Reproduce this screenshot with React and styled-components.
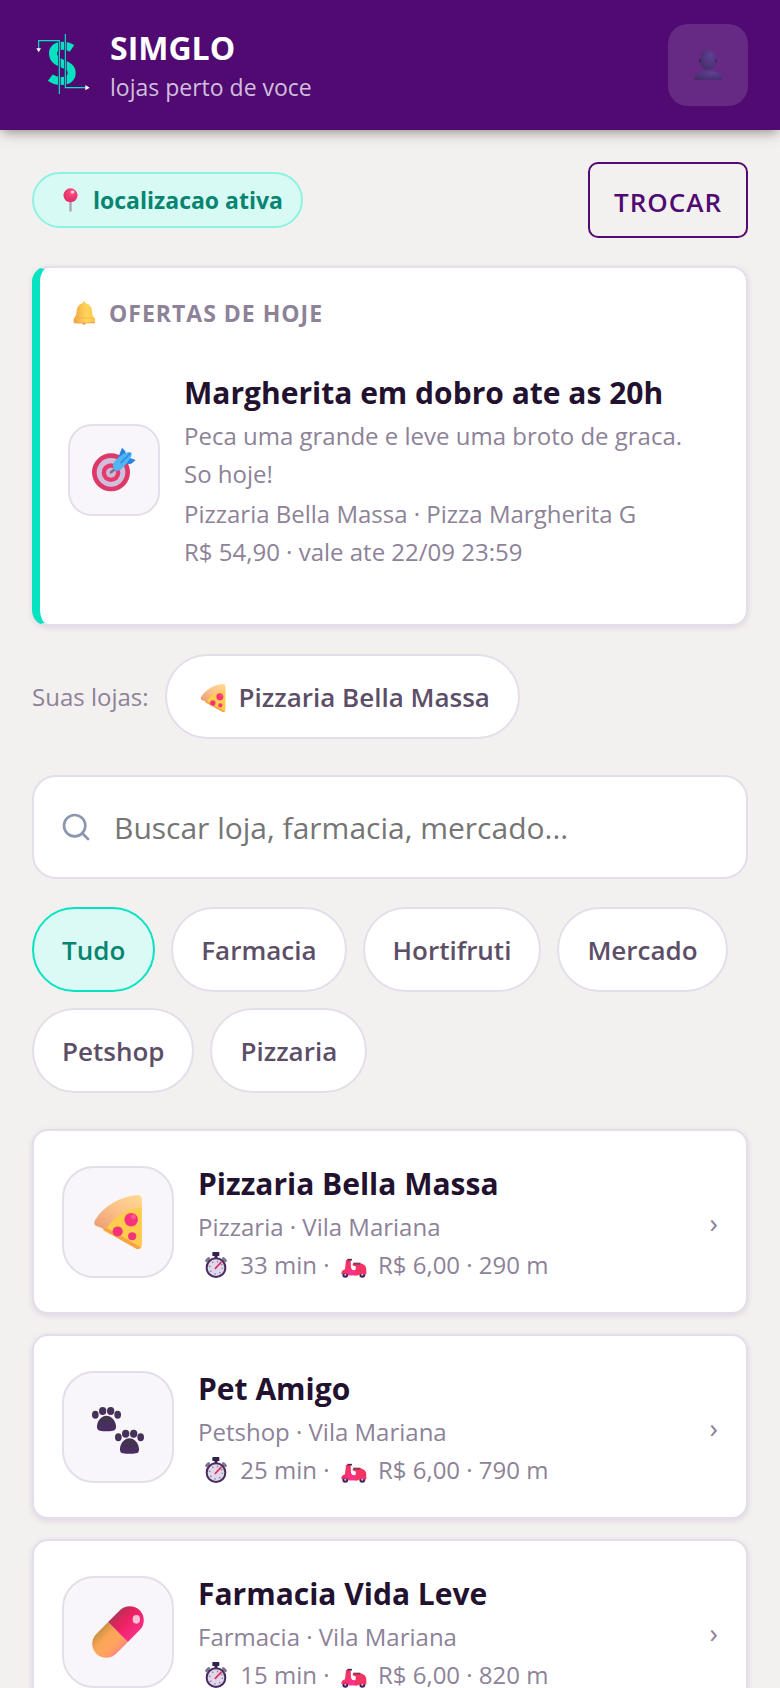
import React, { useState } from "react";
import styled, { createGlobalStyle } from "styled-components";
import { Search } from "lucide-react";

const c = {
  purple: "#500a72",
  teal: "#05e3c1",
  green: "#078570",
  page: "#f3f1f0",
  line: "#e3deea",
  ink: "#23122f",
  soft: "#5d4e68",
  muted: "#8d8298",
};

const GlobalStyle = createGlobalStyle`
  *, *::before, *::after { box-sizing: border-box; }
  body {
    margin: 0;
    background: ${c.page};
    color: ${c.ink};
    font-family: "Open Sans", "Noto Sans", sans-serif;
    font-size: 24px;
    line-height: 38px;
  }
  button, input { font: inherit; color: inherit; margin: 0; }
  h1, h2, h3, p, ul { margin: 0; padding: 0; }
  svg { display: block; flex: none; }
`;

const Header = styled.header`
  display: flex;
  align-items: center;
  gap: 16px;
  padding: 24px 32px;
  background: ${c.purple};
  box-shadow: 0 4px 12px -2px rgba(40, 36, 30, 0.5);
`;

const Brand = styled.div`
  flex: 1;
  min-width: 0;
  padding-top: 4px;
`;

const BrandName = styled.h1`
  color: #fff;
  font-size: 32px;
  line-height: 40px;
  font-weight: 700;
`;

const Tagline = styled.p`
  color: #d1bedd;
  font-size: 23px;
  line-height: 38px;
`;

const ProfileButton = styled.button`
  display: grid;
  place-items: center;
  width: 80px;
  height: 82px;
  padding: 0;
  border: 0;
  border-radius: 20px;
  background: rgba(255, 255, 255, 0.13);
`;

const Main = styled.main`
  display: flex;
  flex-direction: column;
  padding: 32px;
`;

const LocationRow = styled.div`
  display: flex;
  align-items: center;
  justify-content: space-between;
`;

const LocationBadge = styled.span`
  display: flex;
  align-items: center;
  gap: 6px;
  height: 56px;
  padding: 0 18px 0 20px;
  border: 2px solid #8cf3e2;
  border-radius: 28px;
  background: #d8faf4;
  color: ${c.green};
  font-size: 23px;
  font-weight: 700;
`;

const OutlineButton = styled.button`
  height: 76px;
  padding: 4px 24px 0;
  border: 2px solid ${c.purple};
  border-radius: 10px;
  background: transparent;
  color: ${c.purple};
  font-size: 26px;
  font-weight: 600;
  letter-spacing: 1px;
`;

const Card = styled.section`
  border: 2px solid ${c.line};
  border-radius: 16px;
  background: #fff;
  box-shadow: 0 2px 6px rgba(80, 10, 114, 0.12);
`;

const OfferCard = styled(Card)`
  margin-top: 28px;
  padding: 28px;
  border-left: 8px solid ${c.teal};
`;

const OfferHeading = styled.h2`
  display: flex;
  align-items: center;
  gap: 8px;
  color: ${c.muted};
  font-size: 23px;
  line-height: 34px;
  font-weight: 700;
  letter-spacing: 1px;
  text-transform: uppercase;
`;

const OfferBody = styled.div`
  display: flex;
  align-items: center;
  gap: 24px;
  padding: 38px 16px 25px 0;
`;

const Tile = styled.span`
  display: grid;
  place-items: center;
  flex: none;
  width: ${(p) => (p.$large ? 112 : 92)}px;
  height: ${(p) => (p.$large ? 112 : 92)}px;
  border: 2px solid ${c.line};
  border-radius: ${(p) => (p.$large ? 32 : 24)}px;
  background: #f8f6fa;
`;

const Details = styled.div`
  display: flex;
  flex-direction: column;
  flex: 1;
  min-width: 0;
`;

const Name = styled.h3`
  font-size: 30px;
  line-height: 49px;
  font-weight: 700;
`;

const Text = styled.p`
  color: ${c.muted};
`;

const OfferTerms = styled(Text)`
  margin-top: 2px;
`;

const MineRow = styled.div`
  display: flex;
  align-items: center;
  gap: 16px;
  margin-top: 28px;
  color: ${c.muted};
`;

const Pill = styled.button`
  display: flex;
  align-items: center;
  gap: 8px;
  padding: 22px 28px 20px;
  border: 2px solid ${(p) => (p.$active ? c.teal : c.line)};
  border-radius: 43px;
  background: ${(p) => (p.$active ? "#dbfaf5" : "#fff")};
  color: ${(p) => (p.$active ? c.green : c.soft)};
  font-size: 26px;
  line-height: 39px;
  font-weight: 600;
`;

const SearchBox = styled.label`
  display: flex;
  align-items: center;
  gap: 22px;
  height: 104px;
  margin-top: 36px;
  padding: 0 26px;
  border: 2px solid ${c.line};
  border-radius: 24px;
  background: #fff;
  color: #8b97ae;
`;

const SearchInput = styled.input`
  flex: 1;
  min-width: 0;
  padding: 0;
  border: 0;
  outline: 0;
  background: transparent;
  color: ${c.ink};
  font-size: 30px;
  line-height: 45px;
  &::placeholder { color: #757575; opacity: 1; }
`;

const Filters = styled.div`
  display: flex;
  flex-wrap: wrap;
  gap: 16px;
  margin-top: 28px;
`;

const StoreList = styled.ul`
  display: flex;
  flex-direction: column;
  gap: 20px;
  margin-top: 36px;
  list-style: none;
`;

const StoreLink = styled(Card).attrs({ as: "a" })`
  display: flex;
  align-items: center;
  gap: 24px;
  padding: 28px;
  color: inherit;
  text-decoration: none;
`;

const Delivery = styled(Text)`
  display: flex;
  align-items: center;
  white-space: pre;
`;

const Chevron = styled.span`
  color: ${c.muted};
  font-size: 28px;
`;

const Glyph = styled.svg.attrs({ "aria-hidden": true })`
  width: ${(p) => p.$w}px;
  height: ${(p) => p.$h || p.$w}px;
`;

const Logo = () => (
  <Glyph $w={62} $h={64} viewBox="96 99 186 192" fill="none">
    <path d="M216 145C207 139 197 137 187 137C170 137 159 147 159 160C159 179 173 185 188 191C206 198 215 204 215 219C215 235 203 243 184 243C171 243 160 240 151 233" stroke={c.teal} strokeWidth="24" />
    <path d="M178 122V282M196 102V263" stroke={c.purple} strokeWidth="8" />
    <path d="M116 146V122H178V282M196 102V263H257" stroke={c.teal} strokeWidth="3.500" />
    <path d="M109 145H123L116 157ZM256 255V271L269 263Z" fill="#fff" />
  </Glyph>
);

const Person = () => (
  <Glyph $w={32} viewBox="905 147 96 96">
    <defs>
      <radialGradient id="person" cx=".65" cy=".3" r=".8">
        <stop stopColor="#5f4093" />
        <stop offset="1" stopColor="#462c6b" />
      </radialGradient>
    </defs>
    <ellipse cx="930" cy="183" rx="4" ry="6" fill="#342052" />
    <ellipse cx="976" cy="183" rx="4" ry="6" fill="#342052" />
    <path d="M931 172C930 157 937 150 953 150S977 157 976 172V186C976 200 966 210 953 210S931 200 931 186Z" fill="url(#person)" />
    <path d="M910 240C916 219 933 209 953 209S990 219 996 240Z" fill="url(#person)" />
  </Glyph>
);

const Pin = () => (
  <Glyph $w={33} $h={24} viewBox="161 562 99 72">
    <defs>
      <radialGradient id="pin" cx=".62" cy=".28" r=".75">
        <stop stopColor="#ff8fb0" />
        <stop offset=".3" stopColor="#fa4079" />
        <stop offset="1" stopColor="#d92f66" />
      </radialGradient>
    </defs>
    <rect x="207" y="598" width="7" height="35" rx="3" fill="#aaa3b8" />
    <circle cx="210.500" cy="584" r="21" fill="url(#pin)" />
    <ellipse cx="217" cy="574" rx="5" ry="4" fill="#ffd6e2" />
  </Glyph>
);

const Bell = () => (
  <Glyph $w={33} $h={24} viewBox="142 140 99 72">
    <defs>
      <linearGradient id="bell">
        <stop stopColor="#f3a245" />
        <stop offset=".6" stopColor="#ffd65a" />
        <stop offset="1" stopColor="#ffc34f" />
      </linearGradient>
    </defs>
    <circle cx="190" cy="204" r="7" fill="#e88558" />
    <path d="M190 141Q194 141 195 147C208 150 213 159 214 171C215 184 217 187 223 192V203Q223 207 218 207H164Q159 207 159 203V193C165 187 167 182 168 171C169 158 175 149 186 147Q187 141 190 141Z" fill="url(#bell)" />
    <path d="M159 202Q190 208 223 202V204Q223 207 218 207H164Q159 207 159 203Z" fill="#f1a049" />
    <path d="M164 191H218" stroke="#f4b04a" strokeWidth="2" />
  </Glyph>
);

const Target = () => (
  <Glyph $w={46} viewBox="213 579 138 138">
    <circle cx="273" cy="655" r="57" fill="#dd3868" />
    <circle cx="273" cy="655" r="43" fill="#cfbfdc" />
    <circle cx="273" cy="656" r="28" fill="#e9386c" />
    <circle cx="273" cy="656" r="15" fill="#cbb9d6" />
    <path d="M273 655L290 641" stroke="#7d708c" strokeWidth="8" strokeLinecap="round" />
    <path d="M294 612L306 581L316 592L318 608L296 630ZM322 609L347 618L334 629L318 631L301 629Z" fill="#2783e6" />
    <path d="M279 631C282 620 311 594 327 594Q338 595 334 605C330 617 307 647 293 651C282 651 278 642 279 631Z" fill="#50b5f0" />
    <path d="M302 627L331 598" stroke="#2586e4" strokeWidth="4" />
  </Glyph>
);

const Pizza = ({ size, className }) => (
  <Glyph $w={size} className={className} viewBox="212 233 160 160">
    <defs>
      <linearGradient id="crust" x1="0" y1="1" x2="1" y2="0">
        <stop stopColor="#ea9a72" />
        <stop offset=".5" stopColor="#fbc088" />
        <stop offset="1" stopColor="#ffda91" />
      </linearGradient>
      <linearGradient id="cheese" x1="0" y1="0" x2="1" y2="1">
        <stop stopColor="#fca95a" />
        <stop offset=".35" stopColor="#ffcf4b" />
        <stop offset="1" stopColor="#ffc94e" />
      </linearGradient>
    </defs>
    <path d="M245 328C272 292 313 266 363 262V381Q361 395 348 393L249 338Z" fill="url(#cheese)" />
    <path d="M249 337L348 393Q356 395 360 388L254 328Z" fill="#f7a247" />
    <path d="M223 309C250 265 297 238 348 233Q363 233 363 248V269C319 273 281 296 255 335L226 324Q219 318 223 309Z" fill="url(#crust)" />
    <circle cx="331" cy="306" r="20" fill="#f93280" />
    <circle cx="291" cy="341" r="15" fill="#f4327c" />
    <circle cx="334" cy="355" r="12" fill="#f4347a" />
    <circle cx="338" cy="298" r="7" fill="#ff5790" />
  </Glyph>
);

const PillPizza = styled(Pizza)`
  margin: 0 4px;
`;

const Paw = ({ x, y }) => (
  <g transform={`translate(${x} ${y})`} fill="url(#paw)">
    <ellipse cx="10" cy="23" rx="10" ry="12" />
    <ellipse cx="32" cy="12" rx="11" ry="12" />
    <ellipse cx="56" cy="12" rx="11" ry="12" />
    <ellipse cx="77" cy="23" rx="10" ry="12" />
    <path d="M43 26C57 26 71 40 72 57Q73 70 63 71Q43 74 24 71Q14 70 15 57C16 40 30 26 43 26Z" />
  </g>
);

const Paws = () => (
  <Glyph $w={54} viewBox="213 209 162 162">
    <defs>
      <linearGradient id="paw" x1="0" y1="0" x2="0" y2="1">
        <stop stopColor="#403749" />
        <stop offset="1" stopColor="#4c2b69" />
      </linearGradient>
    </defs>
    <Paw x={216} y={230} />
    <Paw x={285} y={298} />
  </Glyph>
);

const Capsule = () => (
  <Glyph $w={54} viewBox="214 234 162 162">
    <defs>
      <linearGradient id="orange" x1="0" y1="0" x2="0" y2="1">
        <stop stopColor="#cc9145" />
        <stop offset=".35" stopColor="#fba657" />
        <stop offset=".75" stopColor="#ffa35e" />
        <stop offset="1" stopColor="#fb8a78" />
      </linearGradient>
      <linearGradient id="pink" x1="0" y1="0" x2="0" y2="1">
        <stop stopColor="#b63355" />
        <stop offset=".4" stopColor="#ec2062" />
        <stop offset="1" stopColor="#f72f85" />
      </linearGradient>
    </defs>
    <g transform="rotate(-45 295 315)">
      <path d="M295 273H245A42 42 0 0 0 245 357H295Z" fill="url(#orange)" />
      <path d="M295 273H345A42 42 0 0 1 345 357H295Z" fill="url(#pink)" />
    </g>
    <ellipse cx="350" cy="277" rx="11" ry="13" fill="#ffc1d8" />
  </Glyph>
);

const Stopwatch = () => (
  <Glyph $w={36} $h={26} viewBox="533 402 108 78">
    <rect x="576" y="402" width="21" height="12" rx="2" fill="#32214f" />
    <path d="M587 412V420" stroke="#32214f" strokeWidth="9" />
    <path d="M559 428L565 422M615 428L609 422" stroke="#817491" strokeWidth="9" strokeLinecap="round" />
    <circle cx="587" cy="449" r="28" fill="#e0d8ea" stroke="#472c5f" strokeWidth="6" />
    <circle cx="587" cy="449" r="19" fill="none" stroke="#90859f" strokeWidth="5" strokeDasharray="4 11" />
    <path d="M585 451L602 433" stroke="#e52d5d" strokeWidth="5" strokeLinecap="round" />
  </Glyph>
);

const Scooter = () => (
  <Glyph $w={36} $h={26} viewBox="110 402 108 78">
    <circle cx="138" cy="470" r="9" fill="#44205e" />
    <circle cx="189" cy="470" r="9" fill="#44205e" />
    <path d="M140 426H154L155 451Q157 459 168 457L170 446L159 441L162 436H184Q201 440 201 456V469H181Q174 475 164 472H149Q146 463 126 468Q125 458 137 454Z" fill="#f53465" />
    <path d="M148 472Q149 457 141 454L155 451Q157 459 168 457V472Z" fill="#ff2f8b" />
    <path d="M144 425H158" stroke="#512851" strokeWidth="5" />
    <path d="M162 437H183" stroke="#873b4e" strokeWidth="6" />
    <circle cx="138" cy="470" r="3" fill="#d9c8e5" />
    <circle cx="189" cy="470" r="3" fill="#d9c8e5" />
  </Glyph>
);

const filters = ["Tudo", "Farmacia", "Hortifruti", "Mercado", "Petshop", "Pizzaria"];

const stores = [
  { name: "Pizzaria Bella Massa", kind: "Pizzaria", time: 33, distance: 290, icon: <Pizza size={54} /> },
  { name: "Pet Amigo", kind: "Petshop", time: 25, distance: 790, icon: <Paws /> },
  { name: "Farmacia Vida Leve", kind: "Farmacia", time: 15, distance: 820, icon: <Capsule /> },
];

export default function App() {
  const [active, setActive] = useState("Tudo");
  return (
    <>
      <GlobalStyle />
      <Header>
        <Logo />
        <Brand>
          <BrandName>SIMGLO</BrandName>
          <Tagline>lojas perto de voce</Tagline>
        </Brand>
        <ProfileButton aria-label="Perfil">
          <Person />
        </ProfileButton>
      </Header>
      <Main>
        <LocationRow>
          <LocationBadge>
            <Pin />
            localizacao ativa
          </LocationBadge>
          <OutlineButton>TROCAR</OutlineButton>
        </LocationRow>

        <OfferCard>
          <OfferHeading>
            <Bell />
            Ofertas de hoje
          </OfferHeading>
          <OfferBody>
            <Tile>
              <Target />
            </Tile>
            <Details>
              <Name>Margherita em dobro ate as 20h</Name>
              <Text>Peca uma grande e leve uma broto de graca. So hoje!</Text>
              <OfferTerms>
                Pizzaria Bella Massa · Pizza Margherita G<br />
                R$ 54,90 · vale ate 22/09 23:59
              </OfferTerms>
            </Details>
          </OfferBody>
        </OfferCard>

        <MineRow>
          Suas lojas:
          <Pill>
            <PillPizza size={28} />
            Pizzaria Bella Massa
          </Pill>
        </MineRow>

        <SearchBox>
          <Search size={32} aria-hidden />
          <SearchInput type="search" aria-label="Buscar" placeholder="Buscar loja, farmacia, mercado..." />
        </SearchBox>

        <Filters>
          {filters.map((f) => (
            <Pill key={f} $active={f === active} aria-pressed={f === active} onClick={() => setActive(f)}>
              {f}
            </Pill>
          ))}
        </Filters>

        <StoreList>
          {stores.map((s) => (
            <li key={s.name}>
              <StoreLink href="#">
                <Tile $large>{s.icon}</Tile>
                <Details>
                  <Name>{s.name}</Name>
                  <Text>{s.kind} · Vila Mariana</Text>
                  <Delivery>
                    <Stopwatch />
                    {` ${s.time} min · `}
                    <Scooter />
                    {` R$ 6,00 · ${s.distance} m`}
                  </Delivery>
                </Details>
                <Chevron>›</Chevron>
              </StoreLink>
            </li>
          ))}
        </StoreList>
      </Main>
    </>
  );
}
